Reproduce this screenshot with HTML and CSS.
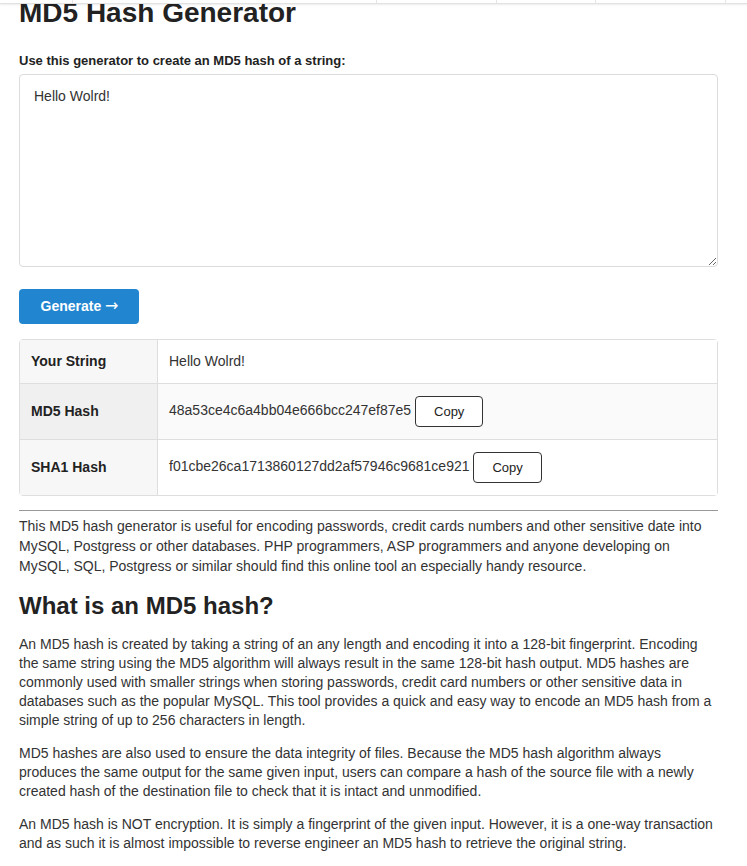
FILE: index.html
```html
<!DOCTYPE html>
<html lang="en">
<head>
<meta charset="utf-8">
<title>MD5 Hash Generator</title>
<link rel="stylesheet" href="styles.css">
</head>
<body>
<div class="topbar">
  <span class="topbar-item w1"></span>
  <span class="topbar-item w2"></span>
  <span class="topbar-item w3"></span>
  <span class="topbar-item w4"></span>
  <span class="topbar-item w5"></span>
</div>
<main class="page">
  <h1 class="title">MD5 Hash Generator</h1>
  <form class="gen">
    <label class="gen-label" for="src">Use this generator to create an MD5 hash of a string:</label>
    <textarea id="src" class="gen-input">Hello Wolrd!</textarea>
    <button type="button" class="btn-primary">Generate <span class="arrow">→</span></button>
  </form>
  <table class="result">
    <tr>
      <th class="result-key">Your String</th>
      <td class="result-val">Hello Wolrd!</td>
    </tr>
    <tr class="striped">
      <th class="result-key">MD5 Hash</th>
      <td class="result-val">48a53ce4c6a4bb04e666bcc247ef87e5 <button type="button" class="btn-copy">Copy</button></td>
    </tr>
    <tr>
      <th class="result-key">SHA1 Hash</th>
      <td class="result-val">f01cbe26ca1713860127dd2af57946c9681ce921 <button type="button" class="btn-copy">Copy</button></td>
    </tr>
  </table>
  <hr class="divider">
  <p class="text intro">This MD5 hash generator is useful for encoding passwords, credit cards numbers and other sensitive date into MySQL, Postgress or other databases. PHP programmers, ASP programmers and anyone developing on MySQL, SQL, Postgress or similar should find this online tool an especially handy resource.</p>
  <h2 class="subtitle">What is an MD5 hash?</h2>
  <p class="text">An MD5 hash is created by taking a string of an any length and encoding it into a 128-bit fingerprint. Encoding the same string using the MD5 algorithm will always result in the same 128-bit hash output. MD5 hashes are commonly used with smaller strings when storing passwords, credit card numbers or other sensitive data in databases such as the popular MySQL. This tool provides a quick and easy way to encode an MD5 hash from a simple string of up to 256 characters in length.</p>
  <p class="text">MD5 hashes are also used to ensure the data integrity of files. Because the MD5 hash algorithm always produces the same output for the same given input, users can compare a hash of the source file with a newly created hash of the destination file to check that it is intact and unmodified.</p>
  <p class="text">An MD5 hash is NOT encryption. It is simply a fingerprint of the given input. However, it is a one-way transaction and as such it is almost impossible to reverse engineer an MD5 hash to retrieve the original string.</p>
</main>
</body>
</html>
```
FILE: styles.css
```css
html, body {
  margin: 0;
  padding: 0;
  background: #fff;
}
body {
  font-family: "Liberation Sans", Arial, sans-serif;
  color: #333;
  font-size: 14px;
  line-height: 19px;
  overflow: hidden;
}
.topbar {
  position: fixed;
  top: 0;
  left: 0;
  right: 0;
  height: 3px;
  display: flex;
  background: #fff;
  border-bottom: 1px solid #e2e2e2;
  box-shadow: 0 1px 2px rgba(0, 0, 0, 0.08);
  z-index: 5;
}
.topbar-item {
  border-right: 1px solid #e6e6e6;
}
.w1 { width: 72px; }
.w2 { width: 303px; }
.w3 { width: 119px; }
.w4 { width: 98px; }
.w5 { width: 129px; }

.page {
  width: 699px;
  margin-left: 19px;
}
.title {
  margin: -3px 0 0;
  font-size: 28px;
  line-height: 32px;
  font-weight: bold;
  color: #222;
}
.gen {
  margin: 0;
}
.gen-label {
  display: block;
  margin: 22px 0 3px;
  font-size: 13px;
  line-height: 20px;
  font-weight: bold;
  color: #222;
}
.gen-input {
  display: block;
  box-sizing: border-box;
  width: 100%;
  height: 193px;
  margin: 0;
  padding: 11px 14px 8px;
  border: 1px solid #dcdcdc;
  border-radius: 4px;
  font-family: "Liberation Sans", Arial, sans-serif;
  font-size: 14px;
  line-height: 20px;
  color: #333;
  background: #fff;
  resize: vertical;
}
.btn-primary {
  display: block;
  box-sizing: border-box;
  width: 120px;
  height: 35px;
  margin: 22px 0 0;
  padding: 0 0 0 1px;
  border: 0;
  border-radius: 4px;
  background: #2185d0;
  color: #fff;
  font-family: "Liberation Sans", Arial, sans-serif;
  font-size: 14px;
  line-height: 17px;
  font-weight: bold;
  text-align: center;
}
.arrow {
  font-family: "DejaVu Sans", sans-serif;
  font-weight: normal;
  font-size: 16px;
  line-height: 10px;
}
.result {
  width: 100%;
  margin-top: 15px;
  border-collapse: separate;
  border-spacing: 0;
  border: 1px solid #dedede;
  border-radius: 4px;
}
.result-key,
.result-val {
  padding: 12px;
  text-align: left;
  vertical-align: middle;
  font-size: 14px;
  line-height: 19px;
  border-top: 1px solid #dedede;
}
.result tr:first-child .result-key,
.result tr:first-child .result-val {
  border-top: 0;
}
.result-key {
  width: 114px;
  padding-left: 11px;
  font-weight: bold;
  color: #222;
  background: #f7f7f7;
  border-right: 1px solid #dedede;
}
.result-val {
  padding-left: 11px;
  color: #333;
  background: #fff;
}
.striped .result-key {
  background: #f0f0f0;
}
.striped .result-val {
  background: #fafafa;
}
.btn-copy {
  vertical-align: middle;
  margin: 0;
  padding: 6px 18px;
  border: 1px solid #333;
  border-radius: 4px;
  background: #fff;
  color: #222;
  font-family: "Liberation Sans", Arial, sans-serif;
  font-size: 13px;
  line-height: 17px;
}
.divider {
  margin: 14px 0 5px;
  height: 0;
  border: 0;
  border-top: 1px solid #999;
}
.text {
  margin: 0 0 14px;
}
.intro {
  line-height: 20px;
  margin-bottom: 0;
}
.subtitle {
  margin: 17px 0 16px;
  font-size: 24px;
  line-height: 26px;
  font-weight: bold;
  color: #222;
}
```
